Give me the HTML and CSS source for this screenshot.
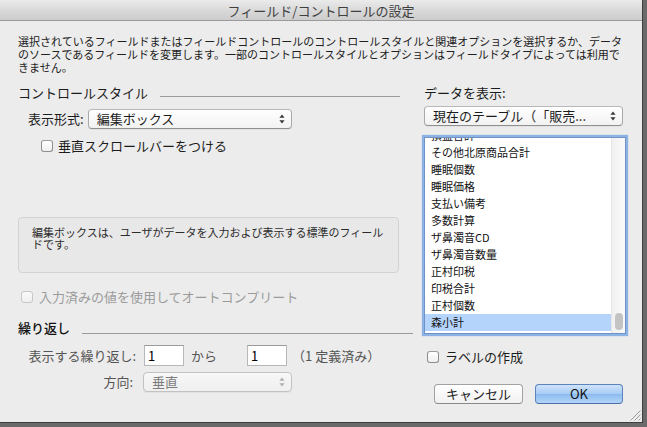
FILE: index.html
```html
<!DOCTYPE html>
<html lang="ja">
<head>
<meta charset="utf-8">
<title>フィールド/コントロールの設定</title>
<link rel="stylesheet" href="styles.css">
</head>
<body>
<div class="window">
  <div class="titlebar">フィールド/コントロールの設定</div>
  <div class="content">
    <p class="intro">選択されているフィールドまたはフィールドコントロールのコントロールスタイルと関連オプションを選択するか、データ<br>のソースであるフィールドを変更します。一部のコントロールスタイルとオプションはフィールドタイプによっては利用で<br>きません。</p>
    <div class="main">
      <div class="left">
        <div class="section-head style-head"><span class="head-text">コントロールスタイル</span><span class="rule"></span></div>
        <div class="row format-row">
          <span class="label">表示形式:</span>
          <div class="popup format-popup"><span class="popup-text">編集ボックス</span>
            <svg class="arrows" width="6" height="10" viewBox="0 0 6 10"><path d="M3 0.5 L5.6 3.8 H0.4 Z M3 9.5 L5.6 6.2 H0.4 Z"/></svg>
          </div>
        </div>
        <div class="check scroll-check"><span class="box"></span><span>垂直スクロールバーをつける</span></div>
        <div class="info">編集ボックスは、ユーザがデータを入力および表示する標準のフィール<br>ドです。</div>
        <div class="check disabled auto-check"><span class="box"></span><span>入力済みの値を使用してオートコンプリート</span></div>
        <div class="section-head repeat-head"><span class="head-text">繰り返し</span><span class="rule"></span></div>
        <div class="row repeat-row">
          <span class="glabel repeat-label">表示する繰り返し:</span>
          <div class="field first-field">1</div>
          <span class="glabel kara">から</span>
          <div class="field second-field">1</div>
          <span class="glabel defined">（1 定義済み）</span>
        </div>
        <div class="row dir-row">
          <span class="glabel dir-label">方向:</span>
          <div class="popup dir-popup disabled-popup"><span class="popup-text">垂直</span>
            <svg class="arrows" width="6" height="10" viewBox="0 0 6 10"><path d="M3 0.5 L5.6 3.8 H0.4 Z M3 9.5 L5.6 6.2 H0.4 Z"/></svg>
          </div>
        </div>
      </div>
      <div class="right">
        <div class="data-label">データを表示:</div>
        <div class="popup table-popup"><span class="popup-text">現在のテーブル（「販売...</span>
          <svg class="arrows" width="6" height="10" viewBox="0 0 6 10"><path d="M3 0.5 L5.6 3.8 H0.4 Z M3 9.5 L5.6 6.2 H0.4 Z"/></svg>
        </div>
        <div class="listbox">
          <div class="rows">
            <div class="rows-inner">
              <div class="item">損益合計</div>
              <div class="item">その他北原商品合計</div>
              <div class="item">睡眠個数</div>
              <div class="item">睡眠価格</div>
              <div class="item">支払い備考</div>
              <div class="item">多数計算</div>
              <div class="item">ザ鼻濁音CD</div>
              <div class="item">ザ鼻濁音数量</div>
              <div class="item">正村印税</div>
              <div class="item">印税合計</div>
              <div class="item">正村個数</div>
              <div class="item selected">森小計</div>
            </div>
          </div>
          <div class="scrolltrack"><div class="thumb"></div></div>
        </div>
        <div class="check label-check"><span class="box"></span><span>ラベルの作成</span></div>
        <div class="buttons">
          <div class="button cancel">キャンセル</div>
          <div class="button ok">OK</div>
        </div>
      </div>
    </div>
  </div>
  <svg class="grip" width="12" height="12" viewBox="0 0 12 12">
    <path d="M11.5 1.5 L1.5 11.5 M11.5 5.5 L5.5 11.5 M11.5 9.5 L9.5 11.5" stroke="#9a9a9a" stroke-width="1" fill="none"/>
  </svg>
</div>
</body>
</html>
```

FILE: styles.css
```css
* { box-sizing: border-box; }
html, body {
  margin: 0;
  padding: 0;
  background: #6a6a6a;
  width: 647px;
  height: 427px;
  overflow: hidden;
}
body {
  font-family: "Noto Sans CJK JP", "Noto Sans", sans-serif;
  color: #1c1c1c;
  text-spacing-trim: space-all;
}
.window {
  position: relative;
  width: 643px;
  height: 423px;
  background: #ececec;
  border-right: 1px solid #3e3e3e;
  border-bottom: 1px solid #3e3e3e;
  display: flex;
  flex-direction: column;
}
.titlebar {
  height: 21px;
  flex: none;
  background: linear-gradient(#ebebeb, #d6d6d6 60%, #cdcdcd);
  border-bottom: 1px solid #9a9a9a;
  text-align: center;
  font-size: 13px;
  line-height: 21px;
  color: #3f3f3f;
}
.content {
  padding: 0 16px 0 18px;
}
.intro {
  margin: 14px 0 0 0;
  font-size: 11px;
  line-height: 13px;
  white-space: nowrap;
  color: #202020;
}
.main {
  display: grid;
  grid-template-columns: 395px 202px;
  column-gap: 11px;
  margin-top: 11px;
}
.left, .right {
  display: flex;
  flex-direction: column;
  font-size: 13px;
}
.section-head {
  display: flex;
  height: 16px;
  line-height: 16px;
}
.head-text { flex: none; }
.rule {
  flex: 1;
  height: 1px;
  background: #9b9b9b;
  align-self: flex-end;
  margin-left: 12px;
}
.style-head .rule { margin-bottom: 4px; margin-right: 13px; }
.repeat-head { margin-top: 15px; }
.repeat-head .head-text { color: #111; font-weight: 500; }
.repeat-head .rule { margin-bottom: 2px; }
.row {
  display: flex;
  align-items: center;
}
.format-row {
  margin-top: 8px;
  height: 20px;
  padding-left: 10px;
}
.label { line-height: 16px; }
.popup {
  position: relative;
  height: 20px;
  border: 1px solid #a9a9a9;
  border-top-color: #b8b8b8;
  border-bottom-color: #8f8f8f;
  border-radius: 4px;
  background: linear-gradient(#ffffff, #f2f2f2);
  display: flex;
  align-items: center;
  padding-left: 8px;
  box-shadow: 0 1px 0 rgba(0,0,0,0.04);
}
.popup-text {
  flex: 1;
  line-height: 16px;
  white-space: nowrap;
}
.arrows {
  flex: none;
  margin-right: 6px;
  fill: #3a3a3a;
}
.format-popup { margin-left: 4px; width: 204px; }
.table-popup { margin-top: 5px; width: 199px; }
.dir-popup { margin-left: 10px; width: 149px; }
.disabled-popup {
  background: linear-gradient(#f7f7f7, #efefef);
  border-color: #c2c2c2;
}
.disabled-popup .popup-text { color: #7c7c7c; }
.disabled-popup .arrows { fill: #b0b0b0; }
.check {
  display: flex;
  align-items: center;
  height: 16px;
  line-height: 16px;
}
.box {
  flex: none;
  width: 12px;
  height: 12px;
  border: 1px solid #8e8e8e;
  border-top-color: #9c9c9c;
  border-radius: 3px;
  background: linear-gradient(#ffffff, #efefef);
  margin-right: 5px;
}
.scroll-check { margin-top: 9px; margin-left: 23px; }
.auto-check { margin-top: 16px; margin-left: 3px; }
.auto-check .box { margin-right: 6px; }
.disabled { color: #9b9b9b; }
.disabled .box { border-color: #c6c6c6; background: linear-gradient(#f9f9f9, #f0f0f0); }
.info {
  margin-top: 63px;
  width: 381px;
  height: 56px;
  border: 1px solid #d2d2d2;
  border-radius: 4px;
  background: #e8e8e8;
  padding: 8px 0 0 13px;
  font-size: 11px;
  line-height: 12px;
  color: #2c2c2c;
  white-space: nowrap;
}
.glabel { color: #555555; line-height: 16px; white-space: nowrap; }
.repeat-row { margin-top: 9px; height: 21px; }
.repeat-label { width: 118px; text-align: right; }
.field {
  width: 40px;
  height: 21px;
  background: #ffffff;
  border: 1px solid #b8b8b8;
  border-top-color: #9a9a9a;
  padding-left: 3px;
  line-height: 19px;
  color: #000;
}
.first-field { margin-left: 8px; }
.kara { margin-left: 7px; }
.second-field { margin-left: 30px; }
.defined { margin-left: 5px; }
.dir-row { margin-top: 6px; height: 20px; }
.dir-label { width: 115px; text-align: right; }
.data-label { height: 16px; line-height: 16px; }
.listbox {
  margin-top: 11px;
  width: 202px;
  height: 197px;
  border: 1px solid #6f93c6;
  box-shadow: 0 0 1px 2px rgba(110, 160, 225, 0.75);
  background: #ffffff;
  display: flex;
}
.rows {
  flex: 1;
  overflow: hidden;
}
.rows-inner { margin-top: -11px; }
.item {
  height: 17px;
  line-height: 17px;
  font-size: 11px;
  padding-left: 6px;
  white-space: nowrap;
  color: #111;
}
.item.selected { background: #b5d4fb; }
.scrolltrack {
  flex: none;
  width: 14px;
  background: linear-gradient(90deg, #f0f0f0, #fafafa);
  border-left: 1px solid #e6e6e6;
  display: flex;
  flex-direction: column;
  justify-content: flex-end;
  align-items: center;
  padding-bottom: 3px;
}
.thumb {
  width: 8px;
  height: 17px;
  border-radius: 4px;
  background: #c3c3c3;
}
.label-check { margin-top: 15px; margin-left: 3px; }
.label-check .box { margin-right: 6px; }
.buttons {
  margin-top: 19px;
  display: flex;
  justify-content: flex-end;
  gap: 12px;
  padding-right: 3px;
}
.button {
  height: 20px;
  border-radius: 4px;
  text-align: center;
  line-height: 18px;
  font-size: 13px;
}
.cancel {
  width: 89px;
  border: 1px solid #a2a2a2;
  border-bottom-color: #8a8a8a;
  background: linear-gradient(#ffffff, #f1f1f1);
}
.ok {
  width: 88px;
  border: 1px solid #5b84bd;
  border-bottom-color: #4a6fa6;
  background: linear-gradient(#cfe3fa, #a6cbf5 50%, #8cbbf0 51%, #b3d5f8);
  color: #111;
}
.grip {
  position: absolute;
  right: 1px;
  bottom: 1px;
}
```
